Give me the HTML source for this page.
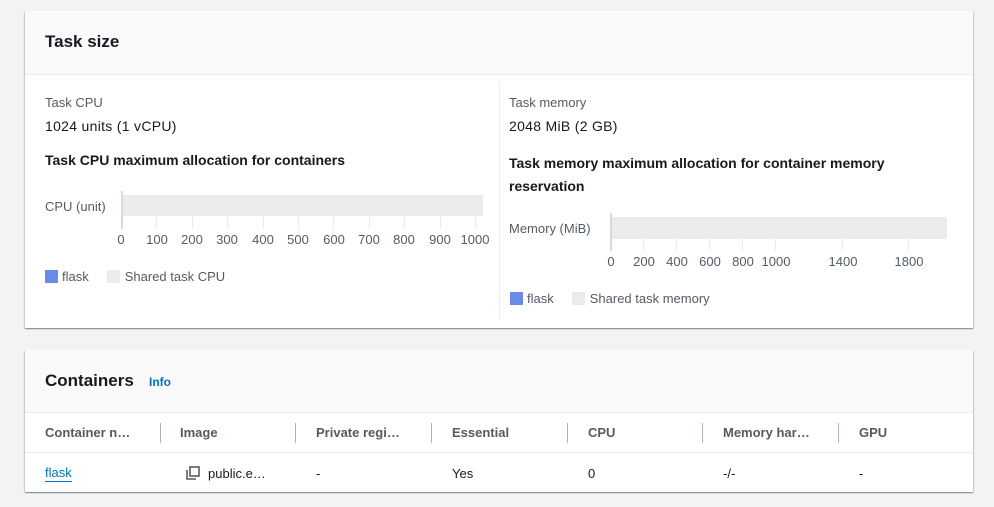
<!DOCTYPE html>
<html><head><style>
body{margin:0;background:#f2f3f3;font-family:"Liberation Sans",sans-serif;width:994px;height:507px;position:relative;overflow:hidden;color:#16191f}
.card{position:absolute;left:25px;width:948px;background:#fff;box-shadow:0 1px 1px rgba(0,28,36,.3),1px 1px 1px rgba(0,28,36,.15),-1px 1px 1px rgba(0,28,36,.15)}
.hd{background:#fafafa;border-bottom:1px solid #eaeded;position:relative}
.a{position:absolute;white-space:nowrap}
.lab{color:#545b64;font-size:13px}
.val{font-size:14px;letter-spacing:.3px}
.b{font-weight:bold;font-size:14px}
.tick{position:absolute;width:1px;background:#e9ebed}
.tl{position:absolute;font-size:13px;color:#545b64;transform:translateX(-50%)}
.th{font-weight:bold;color:#545b64;font-size:13px}
.sep{position:absolute;width:1px;height:20px;background:#aab7b8;top:10px}
.leg{font-size:13px;color:#545b64}
.leg span{display:inline-block;width:13px;height:13px;vertical-align:-2px}
</style></head><body>
<div class="card" style="top:11px;height:317px">
 <div class="hd" style="height:63px"><div class="a" style="left:20px;top:21px;font-size:17px;font-weight:bold">Task size</div></div>
 <div class="a" style="left:474px;top:71px;width:1px;height:237px;background:#eaeded"></div>
 <div class="a lab" style="left:20px;top:84px">Task CPU</div>
 <div class="a val" style="left:20px;top:107px">1024 units (1 vCPU)</div>
 <div class="a b" style="left:20px;top:141px">Task CPU maximum allocation for containers</div>
 <div class="a lab" style="left:20px;top:188px">CPU (unit)</div>
 <div class="a lab" style="left:484px;top:84px">Task memory</div>
 <div class="a val" style="left:484px;top:107px">2048 MiB (2 GB)</div>
 <div class="a b" style="left:484px;top:141px;line-height:23px">Task memory maximum allocation for container memory<br>reservation</div>
 <div class="a lab" style="left:484px;top:210px">Memory (MiB)</div>
 <div class="a leg" style="left:20px;top:258px"><span style="background:#688ae8;margin-right:4px"></span>flask<span style="background:#e9ebed;margin:0 5px 0 18px"></span>Shared task CPU</div>
 <div class="a leg" style="left:485px;top:280px"><span style="background:#688ae8;margin-right:4px"></span>flask<span style="background:#e9ebed;margin:0 5px 0 18px"></span>Shared task memory</div>
</div>
<div class="card" style="top:350px;height:142px">
 <div class="hd" style="height:62px"><div class="a" style="left:20px;top:21px;font-size:17px;font-weight:bold">Containers</div><div class="a" style="left:124px;top:25px;font-size:12px;font-weight:bold;color:#0073bb">Info</div></div>
 <div style="position:relative;height:39px;border-bottom:1px solid #eaeded">
  <div class="a th" style="left:20px;top:12px">Container n…</div><div class="sep" style="left:135px"></div>
  <div class="a th" style="left:155px;top:12px">Image</div><div class="sep" style="left:270px"></div>
  <div class="a th" style="left:291px;top:12px">Private regi…</div><div class="sep" style="left:406px"></div>
  <div class="a th" style="left:427px;top:12px">Essential</div><div class="sep" style="left:542px"></div>
  <div class="a th" style="left:563px;top:12px">CPU</div><div class="sep" style="left:677px"></div>
  <div class="a th" style="left:698px;top:12px">Memory har…</div><div class="sep" style="left:813px"></div>
  <div class="a th" style="left:834px;top:12px">GPU</div>
 </div>
 <div style="position:relative;height:40px;font-size:13px">
  <div class="a" style="left:20px;top:12px;color:#0073bb;border-bottom:1px solid #0073bb;line-height:16px">flask</div>
  <svg class="a" style="left:161px;top:13px" width="14" height="14" viewBox="0 0 14 14"><rect x="4" y="1" width="9" height="9" fill="none" stroke="#545b64" stroke-width="1.6"/><path d="M1 4v9h9" fill="none" stroke="#545b64" stroke-width="1.6"/></svg>
  <div class="a" style="left:183px;top:13px">public.e…</div>
  <div class="a" style="left:291px;top:13px">-</div>
  <div class="a" style="left:427px;top:13px">Yes</div>
  <div class="a" style="left:563px;top:13px">0</div>
  <div class="a" style="left:698px;top:13px">-/-</div>
  <div class="a" style="left:834px;top:13px">-</div>
 </div>
</div>
<div class="tick" style="left:121px;top:191px;height:38px;width:2px;background:#d5dbdb"></div>
<div class="a" style="left:123px;top:195px;width:360px;height:21px;background:#e9ebed"></div>
<div class="tick" style="left:156px;top:216px;height:13px"></div><div class="tick" style="left:192px;top:216px;height:13px"></div><div class="tick" style="left:227px;top:216px;height:13px"></div><div class="tick" style="left:263px;top:216px;height:13px"></div><div class="tick" style="left:298px;top:216px;height:13px"></div><div class="tick" style="left:333px;top:216px;height:13px"></div><div class="tick" style="left:369px;top:216px;height:13px"></div><div class="tick" style="left:404px;top:216px;height:13px"></div><div class="tick" style="left:440px;top:216px;height:13px"></div><div class="tick" style="left:475px;top:216px;height:13px"></div>
<div class="tl" style="left:121px;top:232px">0</div><div class="tl" style="left:157px;top:232px">100</div><div class="tl" style="left:192px;top:232px">200</div><div class="tl" style="left:227px;top:232px">300</div><div class="tl" style="left:263px;top:232px">400</div><div class="tl" style="left:298px;top:232px">500</div><div class="tl" style="left:334px;top:232px">600</div><div class="tl" style="left:369px;top:232px">700</div><div class="tl" style="left:404px;top:232px">800</div><div class="tl" style="left:440px;top:232px">900</div><div class="tl" style="left:475px;top:232px">1000</div>
<div class="tick" style="left:610px;top:213px;height:38px;width:2px;background:#d5dbdb"></div>
<div class="a" style="left:612px;top:217px;width:335px;height:22px;background:#e9ebed"></div>
<div class="tick" style="left:643px;top:239px;height:12px"></div><div class="tick" style="left:676px;top:239px;height:12px"></div><div class="tick" style="left:709px;top:239px;height:12px"></div><div class="tick" style="left:742px;top:239px;height:12px"></div><div class="tick" style="left:775px;top:239px;height:12px"></div><div class="tick" style="left:842px;top:239px;height:12px"></div><div class="tick" style="left:908px;top:239px;height:12px"></div>
<div class="tl" style="left:611px;top:254px">0</div><div class="tl" style="left:644px;top:254px">200</div><div class="tl" style="left:677px;top:254px">400</div><div class="tl" style="left:710px;top:254px">600</div><div class="tl" style="left:743px;top:254px">800</div><div class="tl" style="left:776px;top:254px">1000</div><div class="tl" style="left:843px;top:254px">1400</div><div class="tl" style="left:909px;top:254px">1800</div>
</body></html>
